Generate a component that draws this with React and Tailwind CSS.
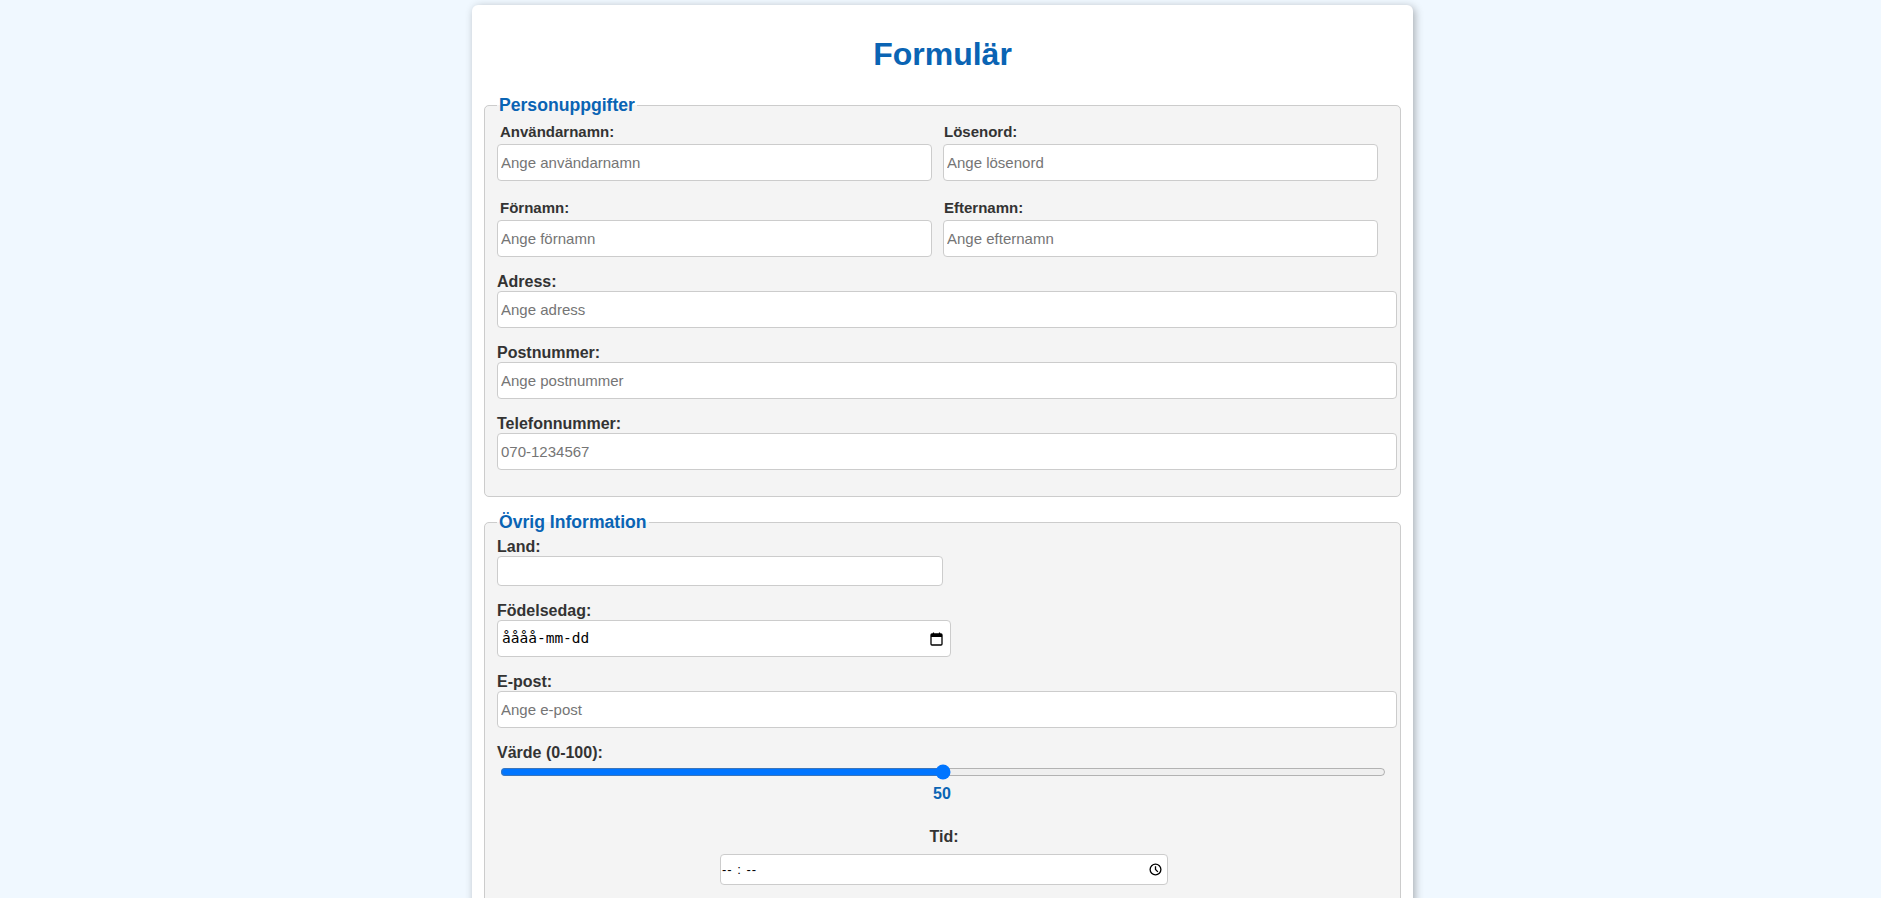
import React from 'react';

const labelFull = 'block text-[16px] leading-[19px] font-bold text-[#333]';
const labelHalf = 'block text-[15px] leading-[24px] font-bold text-[#333]';
const inputBase =
  'block border border-[#ccc] rounded-[4px] bg-white px-[3px] text-[15px] text-black placeholder:text-[#757575] outline-none';

const HalfField = ({ label, placeholder, type = 'text', indent }) => (
  <div className="mb-[15px]">
    <label className={`${labelHalf} ${indent}`}>{label}</label>
    <input type={type} placeholder={placeholder} className={`${inputBase} w-full h-[37px]`} />
  </div>
);

const FullField = ({ label, placeholder, type = 'text' }) => (
  <div className="mb-[15px]">
    <label className={labelFull}>{label}</label>
    <input type={type} placeholder={placeholder} className={`${inputBase} w-full h-[37px]`} />
  </div>
);

const CalendarIcon = () => (
  <svg width="13" height="14" viewBox="0 0 13 14">
    <path d="M3.5 0.5v2M9.5 0.5v2" stroke="#000" strokeWidth="1.2" />
    <rect x="1" y="2" width="11" height="11" rx="1" fill="none" stroke="#000" strokeWidth="1.3" />
    <rect x="1" y="2" width="11" height="3" fill="#000" />
  </svg>
);

const ClockIcon = () => (
  <svg width="13" height="13" viewBox="0 0 13 13">
    <circle cx="6.5" cy="6.5" r="5.4" fill="none" stroke="#000" strokeWidth="1.3" />
    <path d="M6.5 3.2v3.3l2.4 2.4" fill="none" stroke="#000" strokeWidth="1.3" />
  </svg>
);

export default function App() {
  return (
    <div className="min-h-screen bg-[#f0f8ff] pt-[5px] pl-[4px] font-['Liberation_Sans',Arial,sans-serif]">
      <div className="mx-auto w-[941px] bg-white rounded-[6px] shadow-[2px_2px_8px_rgba(0,0,0,0.3)] px-3 pt-[31px] pb-5">
        <h1 className="text-center text-[32px] leading-[37px] font-bold text-[#0a64b4] mb-[22px]">
          Formulär
        </h1>

        {/* Personuppgifter */}
        <fieldset className="border border-[#ccc] rounded-[5px] bg-[#f4f4f4] pl-3 pr-[3px] pt-[5px] pb-[11px] mb-[15px]">
          <legend className="px-[2px] text-[17.6px] leading-[20px] font-bold text-[#0a64b4]">
            Personuppgifter
          </legend>

          <div className="grid grid-cols-[435px_435px] gap-x-[11px]">
            <HalfField label="Användarnamn:" placeholder="Ange användarnamn" indent="pl-[3px]" />
            <HalfField label="Lösenord:" placeholder="Ange lösenord" type="password" indent="pl-[1px]" />
            <HalfField label="Förnamn:" placeholder="Ange förnamn" indent="pl-[3px]" />
            <HalfField label="Efternamn:" placeholder="Ange efternamn" indent="pl-[1px]" />
          </div>

          <FullField label="Adress:" placeholder="Ange adress" />
          <FullField label="Postnummer:" placeholder="Ange postnummer" />
          <FullField label="Telefonnummer:" placeholder="070-1234567" type="tel" />
        </fieldset>

        {/* Övrig Information */}
        <fieldset className="border border-[#ccc] rounded-[5px] bg-[#f4f4f4] pl-3 pr-[3px] pt-[5px] pb-[11px]">
          <legend className="px-[2px] text-[17.6px] leading-[20px] font-bold text-[#0a64b4]">
            Övrig Information
          </legend>

          <div className="mb-[15px]">
            <label className={labelFull}>Land:</label>
            <input type="text" className={`${inputBase} w-[446px] h-[30px]`} />
          </div>

          <div className="mb-[15px]">
            <label className={labelFull}>Födelsedag:</label>
            <div className="flex items-center justify-between w-[454px] h-[37px] border border-[#ccc] rounded-[4px] bg-white pl-[4px] pr-[7px]">
              <span className="font-['DejaVu_Sans_Mono',monospace] text-[14.5px] text-black">åååå-mm-dd</span>
              <CalendarIcon />
            </div>
          </div>

          <FullField label="E-post:" placeholder="Ange e-post" type="email" />

          <div className="mb-[15px]">
            <label className={labelFull}>Värde (0-100):</label>
            <div className="flex items-center h-[20px] w-[886px] ml-[3px]">
              <input type="range" min="0" max="100" defaultValue="50" className="w-full accent-[#0075ff]" />
            </div>
            <div className="w-[890px] mt-[2px] text-center text-[16px] leading-[19px] font-bold text-[#0a64b4]">
              50
            </div>
            <div className="w-[894px] mt-[24px] flex flex-col items-center">
              <label className={labelFull}>Tid:</label>
              <div className="mt-[8px] flex items-center justify-between w-[448px] h-[31px] border border-[#ccc] rounded-[4px] bg-white pl-[1px] pr-[5px]">
                <span className="text-[13px] text-black tracking-[1px]">-- : --</span>
                <ClockIcon />
              </div>
            </div>
          </div>
        </fieldset>
      </div>
    </div>
  );
}
